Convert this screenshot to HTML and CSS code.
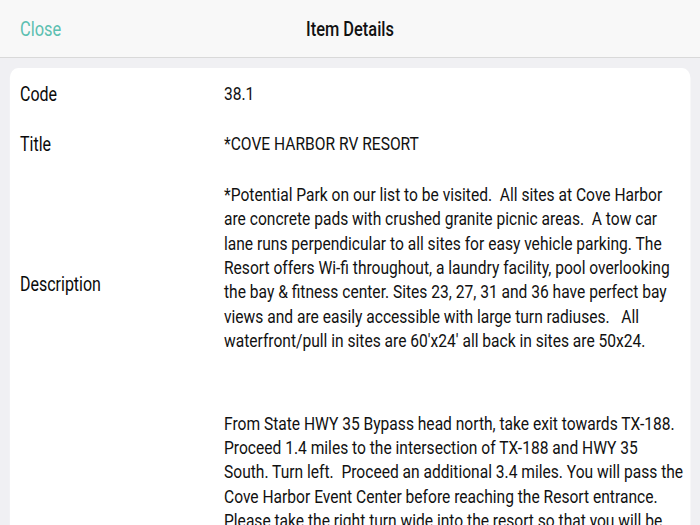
FILE: index.html
```html
<!DOCTYPE html>
<html>
<head>
<meta charset="utf-8">
<link rel="stylesheet" href="styles.css">
</head>
<body>
<div class="screen">
  <header class="navbar">
    <span class="nav-close">Close</span>
    <span class="nav-title">Item Details</span>
    <span class="nav-spacer"></span>
  </header>
  <main class="content">
    <section class="card">
      <div class="row row-code">
        <div class="label">Code</div>
        <div class="value">38.1</div>
      </div>
      <div class="row row-title">
        <div class="label">Title</div>
        <div class="value">*COVE HARBOR RV RESORT</div>
      </div>
      <div class="row row-desc">
        <div class="label">Description</div>
        <div class="value">*Potential Park on our list to be visited.&nbsp;&nbsp;All sites at Cove Harbor<br>are concrete pads with crushed granite picnic areas.&nbsp; A tow car<br>lane runs perpendicular to all sites for easy vehicle parking. The<br>Resort offers Wi-fi throughout, a laundry facility, pool overlooking<br>the bay &amp; fitness center. Sites 23, 27, 31 and 36 have perfect bay<br>views and are easily accessible with large turn radiuses.&nbsp;&nbsp; All<br>waterfront/pull in sites are 60′x24′ all back in sites are 50x24.</div>
      </div>
      <div class="row row-dir">
        <div class="label"></div>
        <div class="value">From State HWY 35 Bypass head north, take exit towards TX-188.<br>Proceed 1.4 miles to the intersection of TX-188 and HWY 35<br>South. Turn left.&nbsp; Proceed an additional 3.4 miles. You will pass the<br>Cove Harbor Event Center before reaching the Resort entrance.<br>Please take the right turn wide into the resort so that you will be<br>able to pull straight in.</div>
      </div>
    </section>
  </main>
</div>
</body>
</html>
```
FILE: styles.css
```css
html, body {
  margin: 0;
  padding: 0;
}
body {
  width: 700px;
  height: 525px;
  overflow: hidden;
  background: #f0f0f3;
  font-family: Roboto, "Liberation Sans", sans-serif;
  color: #111;
}
/* the reference is horizontally compressed; lay out at full width and squeeze */
.screen {
  width: 853.7px;
  transform: scaleX(0.82);
  transform-origin: 0 0;
}
.navbar {
  height: 58px;
  background: #f8f8f8;
  border-bottom: 1px solid #d9d9d9;
  display: flex;
  align-items: center;
  padding: 0 24.4px;
  box-sizing: border-box;
}
.nav-close {
  flex: 1;
  color: #5cbfb1;
  font-size: 20px;
}
.nav-title {
  font-size: 20px;
  font-weight: 500;
  color: #111;
}
.nav-spacer {
  flex: 1;
}
.content {
  padding: 10px 12.2px 0 12.2px;
}
.card {
  background: #fff;
  border-radius: 10px;
  padding: 0 12.2px;
}
.row {
  display: flex;
  align-items: center;
}
.label {
  width: 248.8px;
  flex: none;
  font-size: 19.5px;
  color: #0a0a0a;
}
.value {
  flex: 1;
  font-size: 19px;
  line-height: 24.4px;
  white-space: nowrap;
}
.row-code { padding: 14px 0 13px; }
.row-title { padding: 13px 0 11px; }
.row-desc .value { padding-top: 15px; padding-bottom: 48px; }
.row-dir .value { padding-top: 10px; }
```
